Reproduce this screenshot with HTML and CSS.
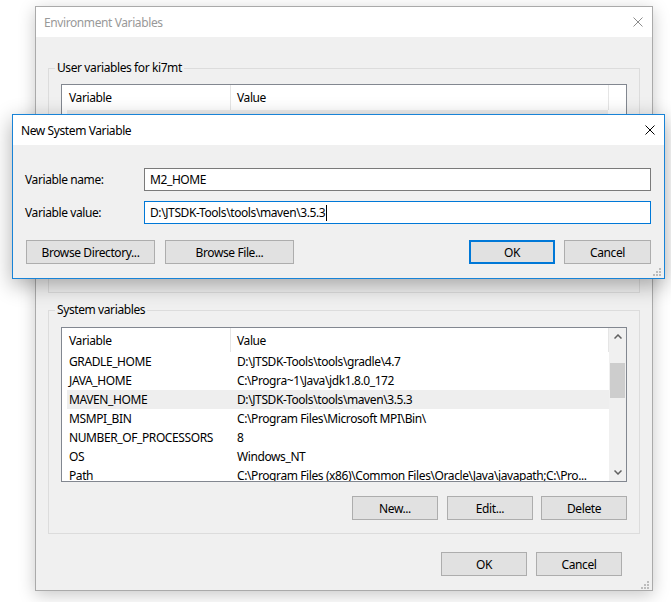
FILE: index.html
```html
<!DOCTYPE html>
<html lang="en">
<head>
<meta charset="utf-8">
<title>Environment Variables</title>
<link rel="stylesheet" href="styles.css">
</head>
<body>
<section class="window env">
  <header class="titlebar inactive">
    <span class="title">Environment Variables</span>
    <svg class="close" width="10" height="10" viewBox="0 0 10 10"><path d="M0.5 0.5L9.5 9.5M9.5 0.5L0.5 9.5"/></svg>
  </header>
  <div class="env-body">
    <fieldset class="group user">
      <legend>User variables for ki7mt</legend>
      <div class="listview">
        <div class="lv-main">
          <div class="lv-header"><span class="h1">Variable</span><span class="h2">Value</span></div>
          <div class="lv-rows">
            <div class="lv-row selected"></div>
          </div>
        </div>
      </div>
      <div class="btn-row">
        <button class="btn">New...</button>
        <button class="btn">Edit...</button>
        <button class="btn">Delete</button>
      </div>
    </fieldset>

    <fieldset class="group system">
      <legend>System variables</legend>
      <div class="listview">
        <div class="lv-main">
          <div class="lv-header"><span class="h1">Variable</span><span class="h2">Value</span></div>
          <div class="lv-rows">
            <div class="lv-row"><span class="c1">GRADLE_HOME</span><span class="c2">D:\JTSDK-Tools\tools\gradle\4.7</span></div>
            <div class="lv-row"><span class="c1">JAVA_HOME</span><span class="c2">C:\Progra~1\Java\jdk1.8.0_172</span></div>
            <div class="lv-row selected"><span class="c1">MAVEN_HOME</span><span class="c2">D:\JTSDK-Tools\tools\maven\3.5.3</span></div>
            <div class="lv-row"><span class="c1">MSMPI_BIN</span><span class="c2">C:\Program Files\Microsoft MPI\Bin\</span></div>
            <div class="lv-row"><span class="c1">NUMBER_OF_PROCESSORS</span><span class="c2">8</span></div>
            <div class="lv-row"><span class="c1">OS</span><span class="c2">Windows_NT</span></div>
            <div class="lv-row"><span class="c1">Path</span><span class="c2">C:\Program Files (x86)\Common Files\Oracle\Java\javapath;C:\Pro...</span></div>
          </div>
        </div>
        <div class="scrollbar">
          <div class="sb-arrow"><svg width="8" height="5" viewBox="0 0 8 5"><path d="M0.5 4.5L4 1L7.5 4.5"/></svg></div>
          <div class="sb-track"><div class="sb-thumb"></div></div>
          <div class="sb-arrow"><svg width="8" height="5" viewBox="0 0 8 5"><path d="M0.5 0.5L4 4L7.5 0.5"/></svg></div>
        </div>
      </div>
      <div class="btn-row">
        <button class="btn">New...</button>
        <button class="btn">Edit...</button>
        <button class="btn">Delete</button>
      </div>
    </fieldset>

    <div class="dialog-buttons">
      <button class="btn">OK</button>
      <button class="btn">Cancel</button>
    </div>
  </div>
  <svg class="grip" width="8" height="8" viewBox="0 0 8 8"><path d="M6 0h2v2h-2zM3 3h2v2h-2zM6 3h2v2h-2zM0 6h2v2h-2zM3 6h2v2h-2zM6 6h2v2h-2z"/></svg>
</section>

<section class="window newvar">
  <header class="titlebar">
    <span class="title">New System Variable</span>
    <svg class="close" width="10" height="10" viewBox="0 0 10 10"><path d="M0.5 0.5L9.5 9.5M9.5 0.5L0.5 9.5"/></svg>
  </header>
  <div class="nv-body">
    <div class="field">
      <label class="field-label">Variable name:</label>
      <div class="textbox">M2_HOME</div>
    </div>
    <div class="field">
      <label class="field-label">Variable value:</label>
      <div class="textbox focused">D:\JTSDK-Tools\tools\maven\3.5.3<span class="caret"></span></div>
    </div>
    <div class="nv-buttons">
      <button class="btn wide">Browse Directory...</button>
      <button class="btn wide">Browse File...</button>
      <span class="spacer"></span>
      <button class="btn default">OK</button>
      <button class="btn cancel">Cancel</button>
    </div>
  </div>
  <svg class="grip" width="8" height="8" viewBox="0 0 8 8"><path d="M6 0h2v2h-2zM3 3h2v2h-2zM6 3h2v2h-2zM0 6h2v2h-2zM3 6h2v2h-2zM6 6h2v2h-2z"/></svg>
</section>
</body>
</html>
```

FILE: styles.css
```css
* {
  box-sizing: border-box;
}

html, body {
  margin: 0;
  padding: 0;
}

body {
  width: 671px;
  height: 602px;
  position: relative;
  overflow: hidden;
  background: #ffffff;
  font-family: "Noto Sans", "Open Sans", "DejaVu Sans", sans-serif;
  font-size: 12px;
  line-height: 15px;
  letter-spacing: -0.4px;
  color: #000000;
}

.window {
  position: absolute;
  display: flex;
  flex-direction: column;
  background: #f0f0f0;
}

.env {
  left: 35px;
  top: 6px;
  width: 618px;
  height: 585px;
  border: 1px solid #aaaaaa;
  box-shadow: 0 4px 16px rgba(0, 0, 0, 0.22);
}

.newvar {
  left: 12px;
  top: 114px;
  width: 653px;
  height: 165px;
  border: 1px solid #1883d7;
  box-shadow: 0 6px 20px rgba(0, 0, 0, 0.32);
}

.titlebar {
  flex: none;
  height: 30px;
  background: #ffffff;
  display: flex;
  align-items: center;
  justify-content: space-between;
  padding: 0 9px 0 8px;
}

.titlebar .close path {
  stroke: #000000;
  stroke-width: 1;
  fill: none;
}

.titlebar.inactive .title {
  color: #999999;
}

.titlebar.inactive .close path {
  stroke: #8c8c8c;
}

.env-body {
  flex: 1;
  padding: 23px 12px 0 12px;
  display: flex;
  flex-direction: column;
}

.group {
  margin: 0;
  border: 1px solid #dcdcdc;
  padding: 0 12px 15px 12px;
  min-width: 0;
}

.group legend {
  padding: 0 2px;
  margin-left: -6px;
  line-height: 16px;
}

.group.system {
  margin-top: 9px;
  padding-bottom: 13px;
}

.listview {
  margin-top: 8px;
  height: 155px;
  border: 1px solid #828790;
  background: #ffffff;
  display: flex;
  overflow: hidden;
}

.system .listview {
  margin-top: 9px;
}

.lv-main {
  flex: 1;
  min-width: 0;
  overflow: hidden;
  display: flex;
  flex-direction: column;
}

.lv-header {
  flex: none;
  height: 24px;
  display: flex;
}

.user .lv-header {
  height: 25px;
}

.lv-header span {
  display: flex;
  align-items: center;
  height: 100%;
  border-right: 1px solid #e5e5e5;
}

.lv-header .h1 {
  width: 169px;
  padding-left: 7px;
}

.lv-header .h2 {
  width: 378px;
  padding-left: 6px;
}

.lv-rows {
  flex: 1;
  overflow: hidden;
}

.lv-row {
  height: 19px;
  margin-left: 5px;
  display: flex;
  align-items: center;
  white-space: nowrap;
}

.user .lv-row {
  width: 541px;
}

.lv-row.selected {
  background: #eeeeee;
}

.lv-row .c1 {
  flex: none;
  width: 164px;
  padding-left: 2px;
}

.lv-row .c2 {
  flex: 1;
  min-width: 0;
  padding-left: 6px;
  overflow: hidden;
}

.scrollbar {
  flex: none;
  width: 17px;
  background: #f0f0f0;
  display: flex;
  flex-direction: column;
}

.sb-arrow {
  flex: none;
  height: 17px;
  display: flex;
  align-items: center;
  justify-content: center;
}

.sb-arrow path {
  fill: none;
  stroke: #606060;
  stroke-width: 1.5;
}

.sb-track {
  flex: 1;
  padding: 18px 1px 0 1px;
}

.sb-thumb {
  height: 35px;
  background: #cdcdcd;
}

.btn-row {
  margin-top: 14px;
  display: flex;
  justify-content: flex-end;
  gap: 8px;
}

.btn {
  font: inherit;
  letter-spacing: inherit;
  color: #000000;
  width: 86px;
  height: 24px;
  margin: 0;
  padding: 0;
  background: #e1e1e1;
  border: 1px solid #adadad;
  border-radius: 0;
  display: flex;
  align-items: center;
  justify-content: center;
}

.btn-row .btn:first-child {
  margin-right: 1px;
}

.dialog-buttons {
  margin-top: 18px;
  padding-right: 18px;
  display: flex;
  justify-content: flex-end;
  gap: 9px;
}

.grip {
  position: absolute;
  right: 3px;
  bottom: 1px;
}

.grip path {
  fill: #bcbcbc;
}

.newvar .grip {
  bottom: 2px;
}

.nv-body {
  flex: 1;
  padding: 23px 13px 0 12px;
  display: flex;
  flex-direction: column;
}

.field {
  display: flex;
  align-items: center;
  height: 23px;
}

.field + .field {
  margin-top: 10px;
}

.field-label {
  flex: none;
  width: 119px;
}

.textbox {
  width: 507px;
  height: 23px;
  border: 1px solid #7a7a7a;
  background: #ffffff;
  padding-left: 5px;
  display: flex;
  align-items: center;
  white-space: nowrap;
}

.textbox.focused {
  border-color: #0078d7;
}

.caret {
  display: inline-block;
  width: 1px;
  height: 16px;
  margin-left: 1px;
  background: #000000;
}

.nv-buttons {
  margin-top: 16px;
  display: flex;
  align-items: center;
}

.btn.wide {
  width: 129px;
}

.btn.wide:first-child {
  margin-left: 1px;
}

.btn.wide + .btn.wide {
  margin-left: 10px;
}

.spacer {
  flex: 1;
}

.btn.default {
  border: 2px solid #0078d7;
}

.btn.cancel {
  width: 87px;
  margin-left: 9px;
}
```
